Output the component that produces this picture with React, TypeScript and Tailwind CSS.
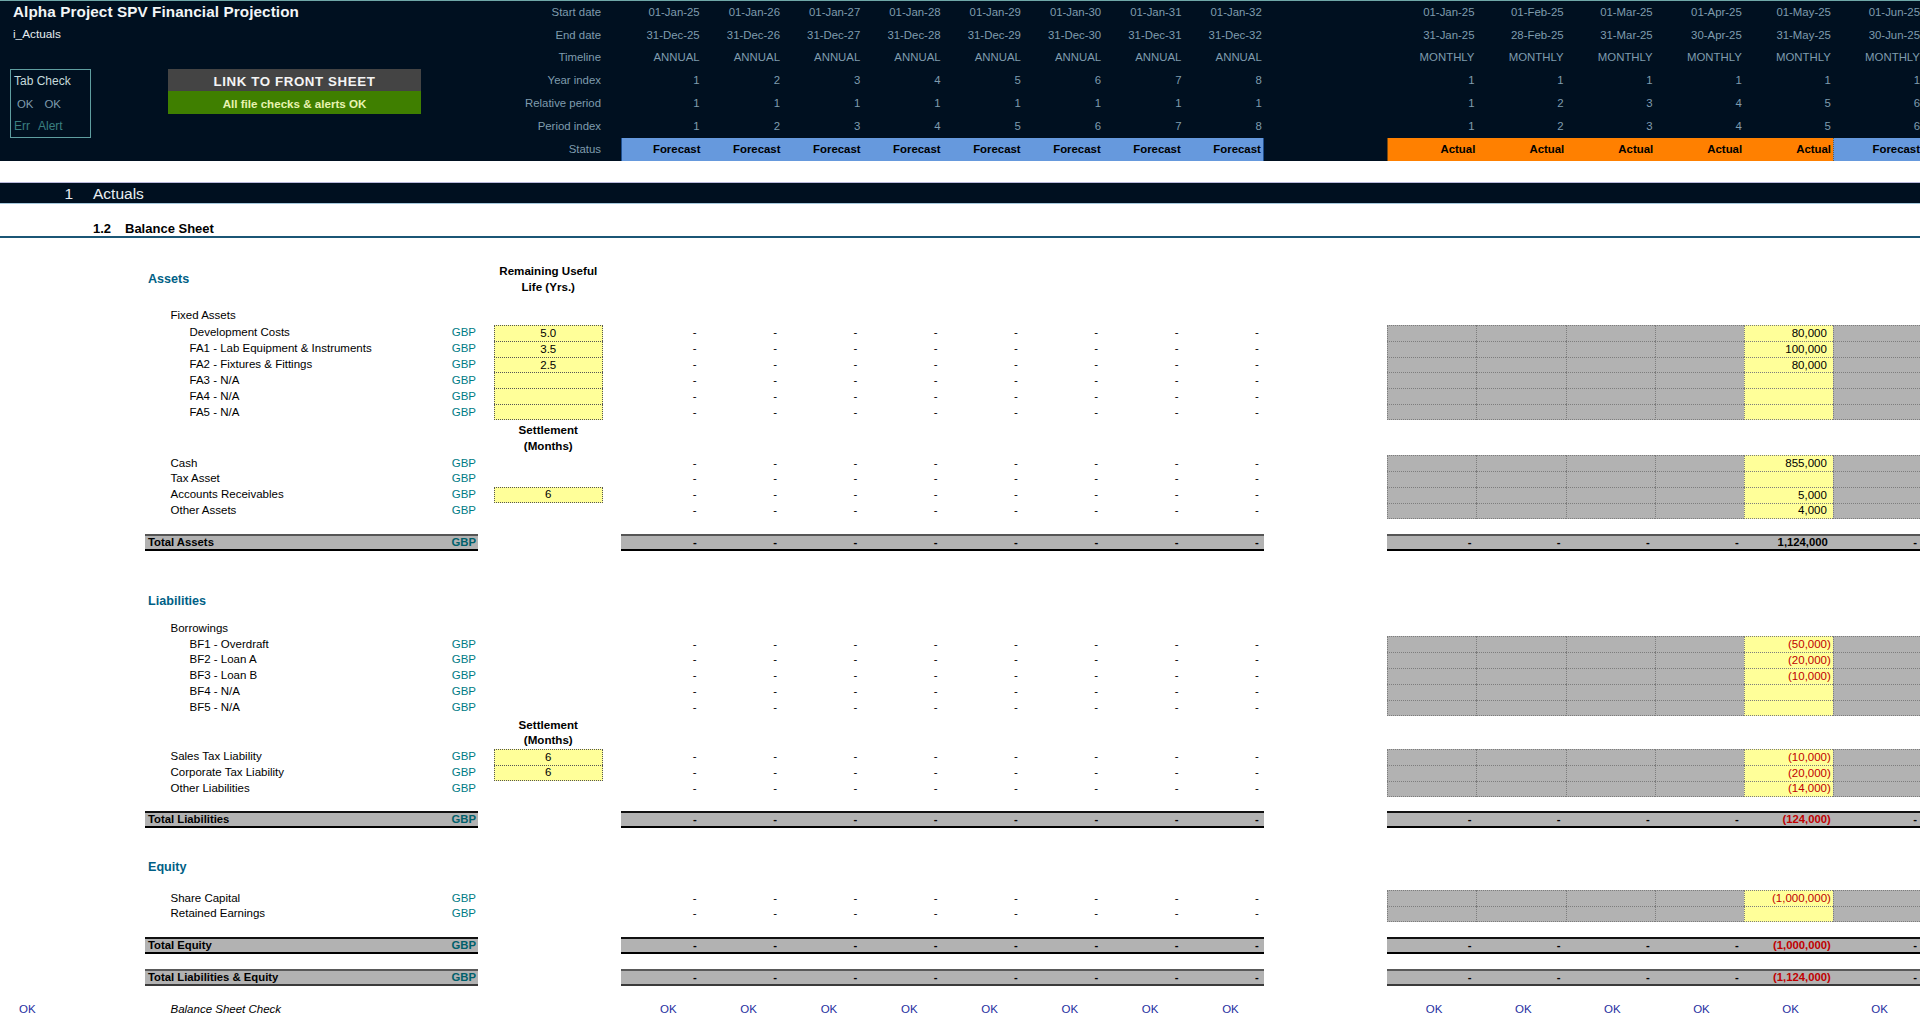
const rowGrid =
  'grid grid-cols-[145px_333px_16px_108.5px_18.9px_642.4px_123.6px_534.6px] items-stretch';

const annualCols = [0, 1, 2, 3, 4, 5, 6, 7];
const monthlyCols = [0, 1, 2, 3, 4, 5];

const annualTimeline = [
  ['01-Jan-25', '01-Jan-26', '01-Jan-27', '01-Jan-28', '01-Jan-29', '01-Jan-30', '01-Jan-31', '01-Jan-32'],
  ['31-Dec-25', '31-Dec-26', '31-Dec-27', '31-Dec-28', '31-Dec-29', '31-Dec-30', '31-Dec-31', '31-Dec-32'],
  ['ANNUAL', 'ANNUAL', 'ANNUAL', 'ANNUAL', 'ANNUAL', 'ANNUAL', 'ANNUAL', 'ANNUAL'],
  ['1', '2', '3', '4', '5', '6', '7', '8'],
  ['1', '1', '1', '1', '1', '1', '1', '1'],
  ['1', '2', '3', '4', '5', '6', '7', '8'],
];

const monthlyTimeline = [
  ['01-Jan-25', '01-Feb-25', '01-Mar-25', '01-Apr-25', '01-May-25', '01-Jun-25'],
  ['31-Jan-25', '28-Feb-25', '31-Mar-25', '30-Apr-25', '31-May-25', '30-Jun-25'],
  ['MONTHLY', 'MONTHLY', 'MONTHLY', 'MONTHLY', 'MONTHLY', 'MONTHLY'],
  ['1', '1', '1', '1', '1', '1'],
  ['1', '2', '3', '4', '5', '6'],
  ['1', '2', '3', '4', '5', '6'],
];

const timelineLabels = ['Start date', 'End date', 'Timeline', 'Year index', 'Relative period', 'Period index', 'Status'];

function Header() {
  return (
    <div className="flex h-[161px] overflow-hidden border-t border-[#6fa8a8] bg-[#001020] text-[11.4px] text-[#7f9cae]">
      <div className="flex w-[500px] shrink-0 flex-col">
        <div className="flex h-[21px] items-center pl-[13px] text-[15.25px] font-bold tracking-[0.1px] text-[#f2f5f7]">
          Alpha Project SPV Financial Projection
        </div>
        <div className="flex h-[24px] items-center pl-[13px] text-[11.8px] text-[#e6ecef]">i_Actuals</div>
        <div className="mt-[23px] flex pl-[10px]">
          <div className="flex h-[69px] w-[81px] flex-col border border-[#5f9ea0] pl-[3px] text-[12px]">
            <div className="flex h-[23px] items-center text-[#c5dadc]">Tab Check</div>
            <div className="flex h-[23px] items-center gap-[11px] pl-[3px] text-[11.4px] text-[#7f9cae]">
              <span>OK</span>
              <span>OK</span>
            </div>
            <div className="flex h-[21px] items-center gap-[8px] text-[#3a7f80]">
              <span>Err</span>
              <span>Alert</span>
            </div>
          </div>
          <div className="ml-[77px] flex w-[253px] flex-col">
            <div className="flex h-[22px] items-center justify-center bg-[#444444] pt-[2px] text-[13.3px] font-bold tracking-[0.6px] text-[#f4f4f4]">
              LINK TO FRONT SHEET
            </div>
            <div className="flex h-[23px] items-center justify-center bg-[#3f7f00] pt-px text-[11.6px] font-bold text-[#e8f3b0]">
              All file checks &amp; alerts OK
            </div>
          </div>
        </div>
      </div>
      <div className="flex w-[101px] shrink-0 flex-col">
        {timelineLabels.map((label) => (
          <div key={label} className="flex h-[22.8px] items-center justify-end">
            {label}
          </div>
        ))}
      </div>
      <div className="ml-[20.4px] w-[642.4px] shrink-0">
        {annualTimeline.map((row, i) => (
          <div key={i} className="grid h-[22.8px] grid-cols-8">
            {row.map((value, c) => (
              <div key={c} className="flex items-center justify-end pr-[2px]">
                {value}
              </div>
            ))}
          </div>
        ))}
        <div className="grid h-[23.2px] grid-cols-8 border-x border-[#1f4f8f] bg-[#6699dd] font-bold text-black">
          {annualCols.map((c) => (
            <div key={c} className="flex items-center justify-end pr-[2px]">
              Forecast
            </div>
          ))}
        </div>
      </div>
      <div className="ml-[123.6px] w-[534.6px] shrink-0">
        {monthlyTimeline.map((row, i) => (
          <div key={i} className="grid h-[22.8px] grid-cols-6">
            {row.map((value, c) => (
              <div key={c} className="flex items-center justify-end pr-[2px]">
                {value}
              </div>
            ))}
          </div>
        ))}
        <div className="grid h-[23.2px] grid-cols-6 border-l border-[#7a4a10] font-bold text-black">
          {monthlyCols.map((c) => (
            <div
              key={c}
              className={
                c < 5
                  ? 'flex items-center justify-end bg-[#ff8000] pr-[2px]'
                  : 'flex items-center justify-end border-l border-dotted border-[#7a5a30] bg-[#6699dd] pr-[2px]'
              }
            >
              {c < 5 ? 'Actual' : 'Forecast'}
            </div>
          ))}
        </div>
      </div>
    </div>
  );
}

type Cell = string | undefined;

function AnnualDashes() {
  return (
    <div className="grid grid-cols-8">
      {annualCols.map((c) => (
        <div key={c} className="flex items-center justify-end pr-[5px]">
          -
        </div>
      ))}
    </div>
  );
}

function MonthlyInputs({ value, last }: { value?: Cell; last?: boolean }) {
  return (
    <div className="grid grid-cols-6">
      {monthlyCols.map((c) => {
        const neg = value && value.startsWith('(');
        return (
          <div
            key={c}
            className={
              (c === 4 ? 'bg-[#ffff99] ' : 'bg-[#b2b2b2] ') +
              (last ? 'border-b ' : '') +
              (neg ? 'pr-[2px] text-[#c00000] ' : 'pr-[6px] ') +
              'flex items-center justify-end border-t border-l border-dotted border-[#7d7d7d]'
            }
          >
            {c === 4 ? value : null}
          </div>
        );
      })}
    </div>
  );
}

function Gbp() {
  return <div className="flex items-center justify-end pr-[2px] text-[#007c85]">GBP</div>;
}

function InputLine({
  label,
  indent,
  box,
  boxed,
  value,
  last,
  lastBox,
}: {
  label: string;
  indent?: boolean;
  box?: string;
  boxed?: boolean;
  value?: string;
  last?: boolean;
  lastBox?: boolean;
}) {
  return (
    <div className={rowGrid + ' h-[15.9px]'}>
      <div />
      <div className="grid grid-cols-[1fr_40px]">
        <div className={indent ? 'flex items-center pl-[44.5px]' : 'flex items-center pl-[25.5px]'}>{label}</div>
        <Gbp />
      </div>
      <div />
      {boxed ? (
        <div
          className={
            'flex items-center justify-center border-x border-t border-dotted border-[#555555] bg-[#ffff99] ' +
            (lastBox ? 'border-b' : '')
          }
        >
          {box}
        </div>
      ) : (
        <div />
      )}
      <div />
      <AnnualDashes />
      <div />
      <MonthlyInputs value={value} last={last} />
    </div>
  );
}

function TotalLine({
  label,
  values,
  tone,
}: {
  label: string;
  values: string;
  tone: 'grey' | 'black' | 'double';
}) {
  const edges =
    tone === 'black'
      ? 'border-t-[#111111] border-b-black'
      : tone === 'grey'
        ? 'border-t-[#555555] border-b-black'
        : 'border-t-[#595959] border-b-[#3a3a3a]';
  const band = 'border-t-2 border-b-2 bg-[#b2b2b2] text-[11.3px] font-bold ' + edges;
  const neg = values.startsWith('(');
  return (
    <div className={rowGrid + (tone === 'double' ? ' h-[17.4px]' : ' h-[16.6px]')}>
      <div />
      <div className={band + ' flex items-center justify-between pr-[2px] pl-[3px]'}>
        <span>{label}</span>
        <span className="text-[#00606b]">GBP</span>
      </div>
      <div />
      <div />
      <div />
      <div className={band + ' grid grid-cols-8'}>
        {annualCols.map((c) => (
          <div key={c} className="flex items-center justify-end pr-[5px]">
            -
          </div>
        ))}
      </div>
      <div />
      <div className={band + ' grid grid-cols-6'}>
        {monthlyCols.map((c) => (
          <div
            key={c}
            className={
              c === 4 && neg
                ? 'flex items-center justify-end pr-[2px] text-[#c00000]'
                : 'flex items-center justify-end pr-[5px]'
            }
          >
            {c === 4 ? values : '-'}
          </div>
        ))}
      </div>
    </div>
  );
}

function SectionHeading({ label }: { label: string }) {
  return (
    <div className={rowGrid + ' h-[16px]'}>
      <div />
      <div className="flex items-center pl-[3px] text-[12.6px] font-bold text-[#005f86]">{label}</div>
    </div>
  );
}

function GroupLabel({ label }: { label: string }) {
  return (
    <div className={rowGrid + ' h-[15.8px]'}>
      <div />
      <div className="flex items-center pl-[25.5px]">{label}</div>
    </div>
  );
}

function BoxHeading({ lines, height }: { lines: string[]; height: string }) {
  return (
    <div className={rowGrid + ' ' + height}>
      <div />
      <div />
      <div />
      <div className="flex flex-col items-center justify-center text-[11.6px] font-bold leading-[15.8px]">
        {lines.map((line) => (
          <span key={line}>{line}</span>
        ))}
      </div>
    </div>
  );
}

export default function App() {
  return (
    <div className="h-[1016px] w-[1920px] overflow-hidden bg-white font-['Liberation_Sans',Arial,sans-serif] text-[11.5px] leading-[13px] text-black">
      <Header />

      <div className="mt-[21px] flex h-[22px] items-center border-t border-b border-t-[#b9b9dc] border-b-[#a5c8dc] bg-[#001020] text-[15.5px] text-[#e8eef2]">
        <span className="w-[93px] pr-[20px] text-right">1</span>
        <span>Actuals</span>
      </div>

      <div className="flex h-[34px] items-end border-b-2 border-[#1b5675] pl-[93px] text-[13px] leading-[14px] font-bold">
        <span className="w-[32px]">1.2</span>
        <span>Balance Sheet</span>
      </div>

      <div className={rowGrid + ' mt-[25px] h-[32px]'}>
        <div />
        <div className="flex items-center pl-[3px] text-[12.6px] font-bold text-[#005f86]">Assets</div>
        <div />
        <div className="flex flex-col items-center justify-center text-[11.6px] leading-[15.8px] font-bold whitespace-nowrap">
          <span>Remaining Useful</span>
          <span>Life (Yrs.)</span>
        </div>
      </div>

      <div className="mt-[13px]">
        <GroupLabel label="Fixed Assets" />
      </div>
      <div className="mt-px">
        <InputLine label="Development Costs" indent boxed box="5.0" value="80,000" />
        <InputLine label="FA1 - Lab Equipment & Instruments" indent boxed box="3.5" value="100,000" />
        <InputLine label="FA2 - Fixtures & Fittings" indent boxed box="2.5" value="80,000" />
        <InputLine label="FA3 - N/A" indent boxed />
        <InputLine label="FA4 - N/A" indent boxed />
        <InputLine label="FA5 - N/A" indent boxed lastBox last />
      </div>
      <BoxHeading lines={['Settlement', '(Months)']} height="h-[35px]" />
      <InputLine label="Cash" value="855,000" />
      <InputLine label="Tax Asset" />
      <InputLine label="Accounts Receivables" boxed lastBox box="6" value="5,000" />
      <InputLine label="Other Assets" value="4,000" last />

      <div className="mt-[15px]">
        <TotalLine label="Total Assets" values="1,124,000" tone="grey" />
      </div>

      <div className="mt-[43px]">
        <SectionHeading label="Liabilities" />
      </div>
      <div className="mt-[11px]">
        <GroupLabel label="Borrowings" />
      </div>
      <InputLine label="BF1 - Overdraft" indent value="(50,000)" />
      <InputLine label="BF2 - Loan A" indent value="(20,000)" />
      <InputLine label="BF3 - Loan B" indent value="(10,000)" />
      <InputLine label="BF4 - N/A" indent />
      <InputLine label="BF5 - N/A" indent last />
      <BoxHeading lines={['Settlement', '(Months)']} height="h-[33.5px]" />
      <InputLine label="Sales Tax Liability" boxed box="6" value="(10,000)" />
      <InputLine label="Corporate Tax Liability" boxed lastBox box="6" value="(20,000)" />
      <InputLine label="Other Liabilities" value="(14,000)" last />

      <div className="mt-[14.4px]">
        <TotalLine label="Total Liabilities" values="(124,000)" tone="black" />
      </div>

      <div className="mt-[32px]">
        <SectionHeading label="Equity" />
      </div>
      <div className="mt-[14.4px]">
        <InputLine label="Share Capital" value="(1,000,000)" />
        <InputLine label="Retained Earnings" last />
      </div>

      <div className="mt-[15.5px]">
        <TotalLine label="Total Equity" values="(1,000,000)" tone="black" />
      </div>
      <div className="mt-[14.6px]">
        <TotalLine label="Total Liabilities & Equity" values="(1,124,000)" tone="double" />
      </div>

      <div className={rowGrid + ' mt-[16px] h-[16px] text-[#1f2f9f]'}>
        <div className="flex items-center pl-[19px]">OK</div>
        <div className="flex items-center pl-[25.5px] text-black italic">Balance Sheet Check</div>
        <div />
        <div />
        <div />
        <div className="grid grid-cols-8">
          {annualCols.map((c) => (
            <div key={c} className="flex items-center justify-end pr-[25px]">
              OK
            </div>
          ))}
        </div>
        <div />
        <div className="grid grid-cols-6">
          {monthlyCols.map((c) => (
            <div key={c} className="flex items-center justify-end pr-[34px]">
              OK
            </div>
          ))}
        </div>
      </div>
    </div>
  );
}
